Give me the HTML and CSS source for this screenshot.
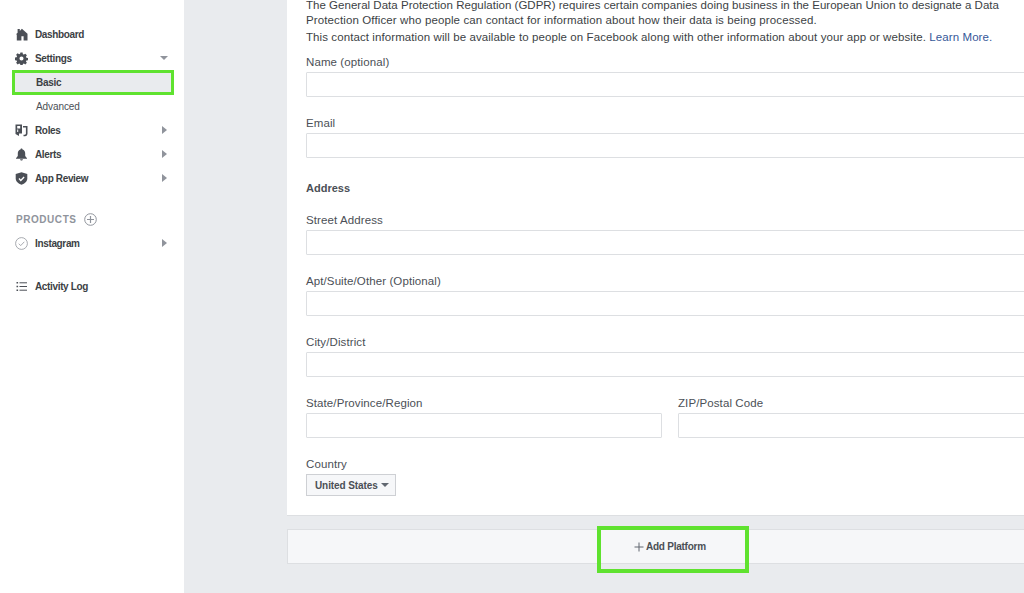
FILE: index.html
```html
<!DOCTYPE html>
<html lang="en">
<head>
<meta charset="utf-8">
<title>App Settings</title>
<link rel="stylesheet" href="styles.css">
</head>
<body>
<div class="page">
  <nav class="sidebar">
    <a class="nav-row">
      <svg class="nav-icon" viewBox="0 0 13 13"><path d="M1 6.200L2.600 4.800V1H4.800V2.900L6.900.8 12.500 5.800V12.500H8.600V8.300H6.400V12.500H1.800V6.400z" fill="#4b4f56"/></svg>
      <span class="nav-text">Dashboard</span>
    </a>
    <a class="nav-row">
      <svg class="nav-icon" viewBox="0 0 14 14"><path fill-rule="evenodd" fill="#4b4f56" d="M5.800.5h2.400l.3 1.800 1.100.5 1.500-1 1.700 1.700-1 1.500.5 1.100 1.700.3v2.400l-1.700.3-.5 1.100 1 1.500-1.700 1.700-1.500-1-1.100.5-.3 1.600H5.800l-.3-1.600-1.100-.5-1.500 1-1.700-1.700 1-1.500-.5-1.100-1.700-.3V5.900l1.700-.3.5-1.100-1-1.500 1.700-1.700 1.500 1 1.100-.5zM7 4.800a2.200 2.200 0 1 0 0 4.400 2.200 2.200 0 0 0 0-4.400z"/></svg>
      <span class="nav-text">Settings</span>
      <span class="caret-down"></span>
    </a>
    <a class="nav-row sub-row sub-active"><span>Basic</span></a>
    <a class="nav-row sub-row"><span>Advanced</span></a>
    <a class="nav-row">
      <svg class="nav-icon" viewBox="0 0 13 13"><path fill="#4b4f56" fill-rule="evenodd" d="M.5.500H7V9.500H4V12L.5 10zM2.200 2V4.500H5.200V2zM2.200 5.500V8H3.200V5.500zM8 2H12.500V9.500C12.500 11 11.500 12.300 10 12.300H8.500V10.800H9.800C10.500 10.800 10.900 10.300 10.900 9.600V3.500H8z"/></svg>
      <span class="nav-text">Roles</span>
      <span class="caret-right"></span>
    </a>
    <a class="nav-row">
      <svg class="nav-icon" viewBox="0 0 13 13"><path fill="#4b4f56" d="M6.500.500c.6 0 1 .4 1 1 1.800.5 2.700 2 2.700 4v2.500l1.800 2.300v.5H1v-.5l1.800-2.300V5.500c0-2 .9-3.500 2.700-4 0-.6.400-1 1-1zM5 11.300h3c-.2.800-.8 1.200-1.500 1.200S5.200 12.100 5 11.300z"/></svg>
      <span class="nav-text">Alerts</span>
      <span class="caret-right"></span>
    </a>
    <a class="nav-row">
      <svg class="nav-icon" viewBox="0 0 13 13"><path fill="#4b4f56" d="M6.500.300L12.300 2V6.500C12.300 9.500 9.800 11.700 6.500 12.800 3.200 11.700.7 9.500.7 6.500V2z"/><path d="M4 6.600l1.800 1.800 3.300-3.300" fill="none" stroke="#fff" stroke-width="1.400"/></svg>
      <span class="nav-text">App Review</span>
      <span class="caret-right"></span>
    </a>
    <div class="products">
      <span class="products-label">PRODUCTS</span>
      <svg class="products-add" viewBox="0 0 13 13"><circle cx="6.500" cy="6.500" r="5.800" fill="none" stroke="#90949c"/><path d="M6.500 3v7M3 6.500h7" stroke="#90949c" stroke-width="1.200"/></svg>
    </div>
    <a class="nav-row">
      <svg class="nav-icon" viewBox="0 0 13 13"><circle cx="6.500" cy="6.500" r="5.900" fill="none" stroke="#90949c" stroke-width=".8"/><path d="M3.800 6.700l1.900 1.900 3.600-3.800" fill="none" stroke="#90949c" stroke-width=".8"/></svg>
      <span class="nav-text">Instagram</span>
      <span class="caret-right"></span>
    </a>
    <a class="nav-row activity">
      <svg class="nav-icon" viewBox="0 0 13 13"><path fill="#4b4f56" d="M1.500 2h1.600v1.600H1.500zM1.500 5.700h1.600v1.600H1.500zM1.500 9.400h1.600v1.600H1.500z"/><path stroke="#4b4f56" stroke-width="1" d="M4.500 2.800h7.500M4.500 6.500h7.500M4.500 10.200h7.500"/></svg>
      <span class="nav-text">Activity Log</span>
    </a>
  </nav>
  <main class="main">
    <section class="panel">
      <p class="intro"><span class="line-one">The General Data Protection Regulation (GDPR) requires certain companies doing business in the European Union to designate a Data</span> Protection Officer who people can contact for information about how their data is being processed.</p>
      <p class="intro intro-second">This contact information will be available to people on Facebook along with other information about your app or website. <a class="link">Learn More.</a></p>
      <label class="field-label first">Name (optional)</label>
      <div class="input"></div>
      <label class="field-label">Email</label>
      <div class="input"></div>
      <h3 class="heading">Address</h3>
      <label class="field-label street">Street Address</label>
      <div class="input"></div>
      <label class="field-label">Apt/Suite/Other (Optional)</label>
      <div class="input"></div>
      <label class="field-label">City/District</label>
      <div class="input"></div>
      <div class="split">
        <div>
          <label class="field-label">State/Province/Region</label>
          <div class="input"></div>
        </div>
        <div>
          <label class="field-label">ZIP/Postal Code</label>
          <div class="input"></div>
        </div>
      </div>
      <label class="field-label">Country</label>
      <div class="select">United States <span class="select-caret"></span></div>
    </section>
    <div class="platform-bar">
      <svg class="plus" viewBox="0 0 10 10"><path d="M5 .5v9M.5 5h9" stroke="#606770" stroke-width="1"/></svg>
      <span class="platform-text">Add Platform</span>
      <span class="platform-highlight"></span>
    </div>
  </main>
</div>
</body>
</html>
```
FILE: styles.css
```css
html, body {
  margin: 0;
  height: 593px;
  overflow: hidden;
  background: #e9ebee;
  font-family: "Liberation Sans", Arial, sans-serif;
  color: #4b4f56;
}
.page {
  display: flex;
  width: 1024px;
  height: 593px;
  overflow: hidden;
}
.sidebar {
  flex: 0 0 184px;
  height: 593px;
  box-sizing: border-box;
  padding-top: 22px;
  background: #fff;
}
.nav-row {
  display: flex;
  align-items: center;
  height: 24px;
  padding: 0 16px;
  box-sizing: border-box;
  font-size: 10px;
  letter-spacing: -0.35px;
  font-weight: bold;
  color: #3c3f45;
}
.nav-icon {
  flex: 0 0 13px;
  width: 13px;
  height: 13px;
  margin-left: -1px;
  margin-right: 7px;
}
.nav-text {
  flex: 1;
}
.caret-down {
  width: 0;
  height: 0;
  border-left: 4px solid transparent;
  border-right: 4px solid transparent;
  border-top: 4px solid #90949c;
}
.caret-right {
  width: 0;
  height: 0;
  margin-right: 1px;
  border-top: 4px solid transparent;
  border-bottom: 4px solid transparent;
  border-left: 5px solid #90949c;
}
.sub-row {
  padding-left: 36px;
  font-weight: normal;
  color: #4b4f56;
  letter-spacing: -0.08px;
}
.sub-active {
  margin: -0.5px 10px -0.5px 12px;
  padding-left: 21px;
  height: 25px;
  background: #e9ebee;
  border: 3px solid #5fe22f;
  font-weight: bold;
  letter-spacing: -0.3px;
  color: #3c3f45;
}
.products {
  display: flex;
  align-items: center;
  height: 16px;
  margin-top: 21px;
  padding-left: 16px;
}
.products-label {
  font-size: 10px;
  font-weight: bold;
  letter-spacing: 0.55px;
  color: #90949c;
}
.products-add {
  width: 13px;
  height: 13px;
  margin-left: 7px;
}
.products + .nav-row {
  margin-top: 4px;
}
.activity {
  margin-top: 19px;
}
.main {
  flex: 0 0 840px;
  box-sizing: border-box;
  padding-left: 103px;
}
.panel {
  display: flow-root;
  box-sizing: border-box;
  width: 766px;
  height: 516px;
  padding: 0 19px;
  background: #fff;
  border-bottom: 1px solid #dddfe2;
}
.intro {
  margin: -2px 0 0;
  font-size: 11.5px;
  line-height: 14.5px;
  color: #3c3f45;
  letter-spacing: 0.12px;
}
.line-one {
  letter-spacing: 0.02px;
}
.intro-second {
  margin-top: 2.5px;
  letter-spacing: 0.09px;
}
.link {
  color: #365899;
}
.field-label {
  display: block;
  height: 15px;
  margin-top: 18px;
  font-size: 11.5px;
  line-height: 16px;
  letter-spacing: 0.1px;
  color: #4b4f56;
}
.first {
  margin-top: 10px;
}
.input {
  box-sizing: border-box;
  height: 25px;
  margin-top: 3px;
  background: #fff;
  border: 1px solid #dddfe2;
  border-radius: 1px;
}
.heading {
  height: 15px;
  margin: 23px 0 0;
  font-size: 11px;
  line-height: 15px;
  font-weight: bold;
  color: #4b4f56;
}
.street {
  margin-top: 16px;
}
.split {
  display: grid;
  grid-template-columns: 356px 356px;
  gap: 16px;
}
.select {
  display: inline-flex;
  align-items: center;
  box-sizing: border-box;
  width: 90px;
  height: 22px;
  margin-top: 3px;
  padding: 0 8px;
  background: #f6f7f9;
  border: 1px solid #ced0d4;
  font-size: 10px;
  letter-spacing: -0.1px;
  font-weight: bold;
  color: #4b4f56;
  white-space: nowrap;
}
.select-caret {
  flex: none;
  width: 0;
  height: 0;
  margin-left: 3px;
  border-left: 4px solid transparent;
  border-right: 4px solid transparent;
  border-top: 4px solid #606770;
}
.platform-bar {
  position: relative;
  box-sizing: border-box;
  width: 766px;
  height: 35px;
  margin-top: 13px;
  padding-left: 346px;
  background: #f6f7f9;
  border: 1px solid #dddfe2;
  display: flex;
  align-items: center;
}
.plus {
  width: 10px;
  height: 10px;
  margin-right: 2px;
}
.platform-text {
  font-size: 10px;
  letter-spacing: -0.25px;
  font-weight: bold;
  color: #4b4f56;
  line-height: 14px;
  padding-top: 1px;
}
.platform-highlight {
  position: absolute;
  left: 309px;
  top: -4px;
  width: 152px;
  height: 47px;
  box-sizing: border-box;
  border: 4px solid #5fe22f;
}
```
